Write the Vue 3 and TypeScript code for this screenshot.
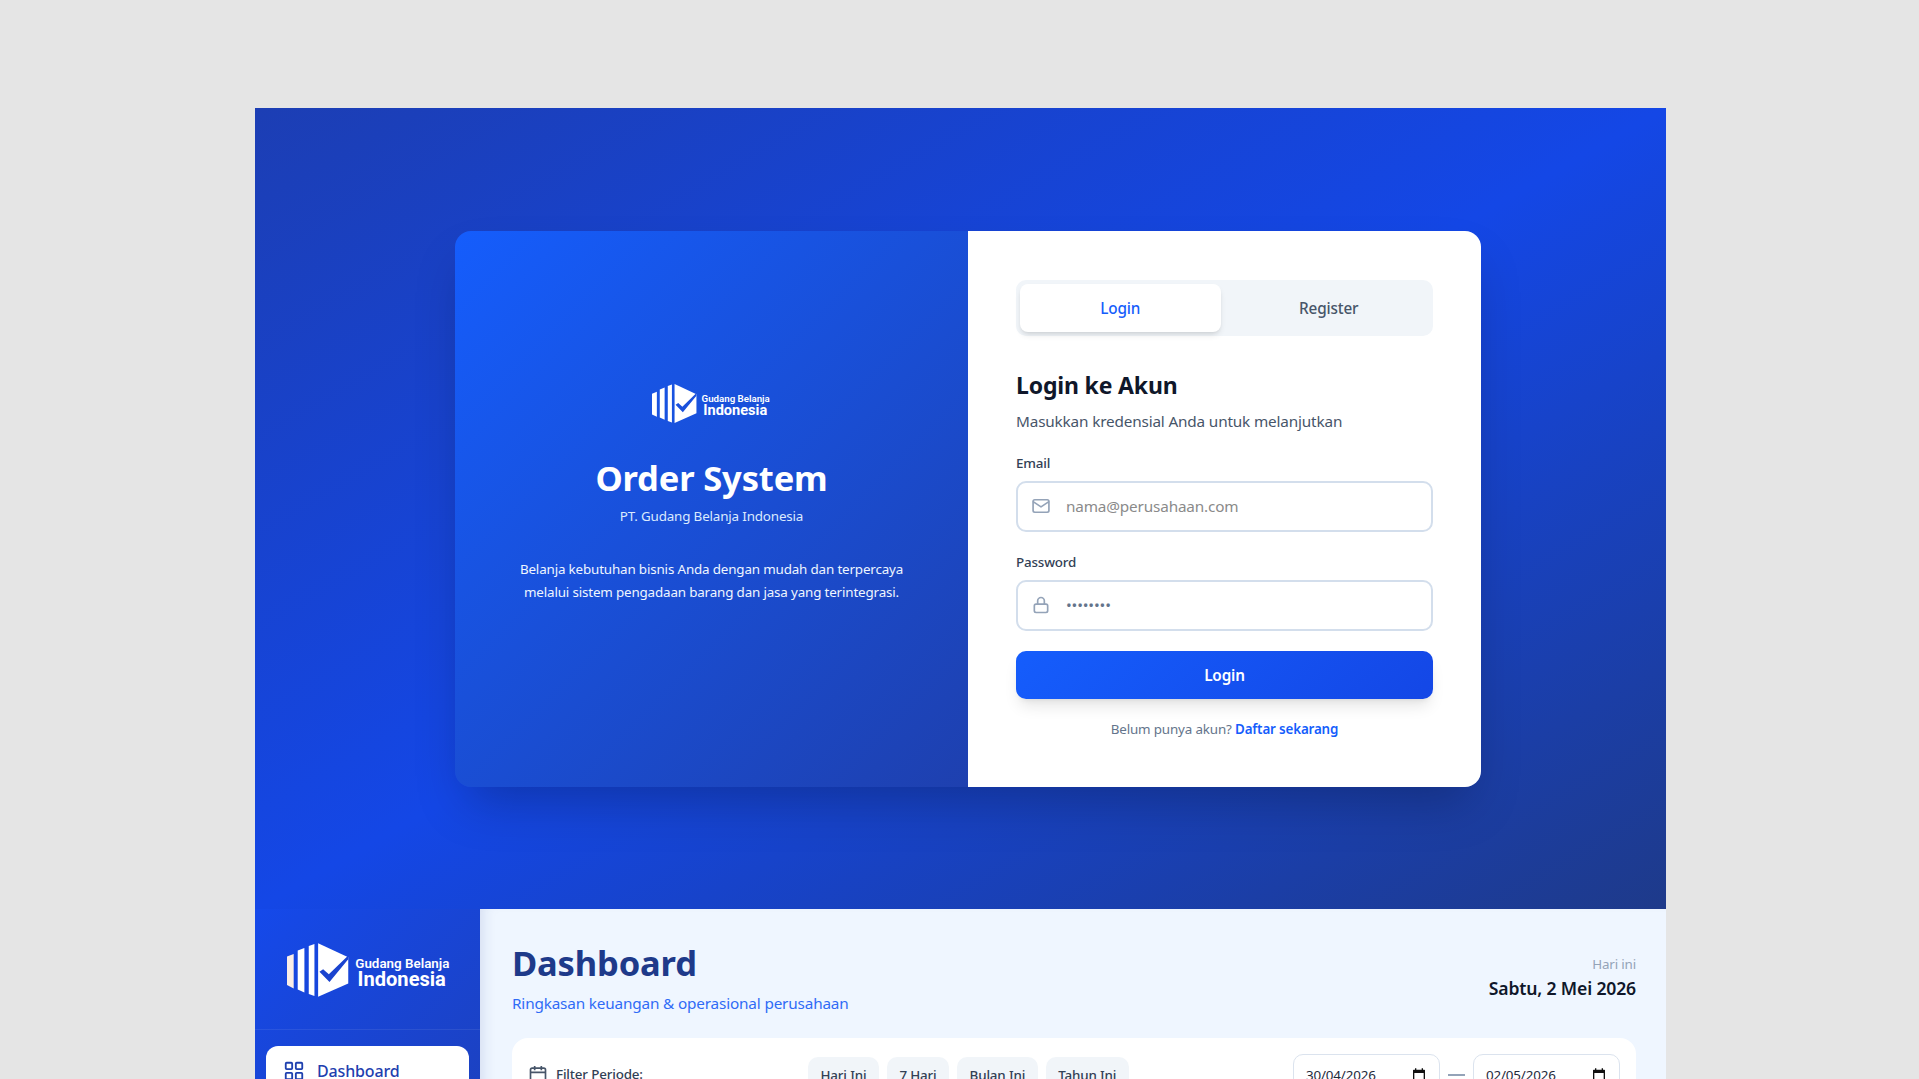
<template>
  <div class="page">
    <div class="frame">
      <section class="hero">
        <div class="auth-card">
          <div class="brand-panel">
            <svg class="logo logo-small" viewBox="0 0 490 160">
              <polygon points="0,40 20,32 20,135 0,125" fill="#fff" />
              <polygon points="32,22 52,14 52,147 32,138" fill="#fff" />
              <polygon points="65,8 82,2 82,158 65,152" fill="#fff" />
              <polygon points="93,0 183,42 183,120 93,160" fill="#fff" />
              <polygon points="97,85 108,78 125,93 183,37 183,48 127,116" fill="#1a50dc" />
              <text x="204" y="73" class="logo-top">Gudang Belanja</text>
              <text x="211" y="128" class="logo-bottom">Indonesia</text>
            </svg>
            <h1>Order System</h1>
            <p class="company">PT. Gudang Belanja Indonesia</p>
            <p class="intro">
              Belanja kebutuhan bisnis Anda dengan mudah dan terpercaya<br />
              melalui sistem pengadaan barang dan jasa yang terintegrasi.
            </p>
          </div>

          <div class="form-panel">
            <div class="tabs">
              <button class="tab active">Login</button>
              <button class="tab">Register</button>
            </div>

            <h2>Login ke Akun</h2>
            <p class="form-sub">Masukkan kredensial Anda untuk melanjutkan</p>

            <label class="field-label">Email</label>
            <div class="field">
              <svg class="field-icon" viewBox="0 0 24 24">
                <rect x="2.5" y="4.5" width="19" height="15" rx="2" />
                <path d="M3 7l9 6 9-6" />
              </svg>
              <input type="text" placeholder="nama@perusahaan.com" />
            </div>

            <label class="field-label second">Password</label>
            <div class="field">
              <svg class="field-icon" viewBox="0 0 24 24">
                <rect x="4" y="11" width="16" height="10" rx="2" />
                <path d="M8 11V7a4 4 0 0 1 8 0v4" />
              </svg>
              <input type="password" value="password" />
            </div>

            <button class="submit">Login</button>
            <p class="switch">Belum punya akun? <a href="#">Daftar sekarang</a></p>
          </div>
        </div>
      </section>

      <section class="dashboard">
        <aside class="sidebar">
          <div class="side-logo">
            <svg class="logo logo-large" viewBox="0 0 490 160">
              <polygon points="0,40 20,32 20,135 0,125" fill="#fbeee6" />
              <polygon points="32,22 52,14 52,147 32,138" fill="#fff" />
              <polygon points="65,8 82,2 82,158 65,152" fill="#fff" />
              <polygon points="93,0 183,42 183,120 93,160" fill="#fff" />
              <polygon points="97,85 108,78 125,93 183,37 183,48 127,116" fill="#1a43cf" />
              <text x="204" y="73" class="logo-top">Gudang Belanja</text>
              <text x="211" y="128" class="logo-bottom">Indonesia</text>
            </svg>
          </div>
          <nav class="side-nav">
            <a class="nav-item" href="#">
              <svg viewBox="0 0 24 24">
                <rect x="3" y="3" width="7" height="7" rx="1" />
                <rect x="14" y="3" width="7" height="7" rx="1" />
                <rect x="14" y="14" width="7" height="7" rx="1" />
                <rect x="3" y="14" width="7" height="7" rx="1" />
              </svg>
              Dashboard
            </a>
          </nav>
        </aside>

        <main class="main">
          <header class="main-head">
            <div>
              <h3>Dashboard</h3>
              <p class="main-sub">Ringkasan keuangan &amp; operasional perusahaan</p>
            </div>
            <div class="today">
              <span>Hari ini</span>
              <strong>Sabtu, 2 Mei 2026</strong>
            </div>
          </header>

          <div class="filter-card">
            <div class="filter-label">
              <svg viewBox="0 0 24 24">
                <rect x="3" y="5" width="18" height="16" rx="2" />
                <path d="M8 2.5v5M16 2.5v5M3 10h18" />
              </svg>
              Filter Periode:
            </div>
            <div class="pills">
              <button v-for="p in periods" :key="p" class="pill">{{ p }}</button>
            </div>
            <div class="dates">
              <div class="date-box">
                30/04/2026
                <svg viewBox="0 0 24 24"><path d="M6 2h2v2h8V2h2v2h2a1 1 0 0 1 1 1v16a1 1 0 0 1-1 1H4a1 1 0 0 1-1-1V5a1 1 0 0 1 1-1h2zM5 9v11h14V9z" /></svg>
              </div>
              <span class="dash"></span>
              <div class="date-box">
                02/05/2026
                <svg viewBox="0 0 24 24"><path d="M6 2h2v2h8V2h2v2h2a1 1 0 0 1 1 1v16a1 1 0 0 1-1 1H4a1 1 0 0 1-1-1V5a1 1 0 0 1 1-1h2zM5 9v11h14V9z" /></svg>
              </div>
            </div>
          </div>
        </main>
      </section>
    </div>
  </div>
</template>

<script setup lang="ts">
const periods: string[] = ['Hari Ini', '7 Hari', 'Bulan Ini', 'Tahun Ini']
</script>

<style>
html,
body {
  margin: 0;
  height: 100%;
  overflow: hidden;
  background: #e5e5e5;
}
</style>

<style scoped>
* {
  box-sizing: border-box;
}
.page {
  height: 1079px;
  padding: 108px 0 0 255px;
  overflow: hidden;
  font-family: "Noto Sans", "Open Sans", sans-serif;
  letter-spacing: -0.01em;
}
button,
input {
  letter-spacing: inherit;
}
.frame {
  width: 1411px;
}
.hero {
  height: 801px;
  padding: 1px 0 0 15px;
  display: flex;
  align-items: center;
  justify-content: center;
  background: linear-gradient(to bottom right, #1c3eb4 0%, #1447e6 50%, #1e3a8a 100%);
}
.auth-card {
  width: 1026px;
  height: 556px;
  display: flex;
  border-radius: 16px;
  overflow: hidden;
  box-shadow: 0 25px 50px -12px rgba(0, 0, 0, 0.25);
}
.brand-panel {
  width: 50%;
  padding-top: 153px;
  display: flex;
  flex-direction: column;
  align-items: center;
  text-align: center;
  color: #fff;
  background: linear-gradient(135deg, #155dfc 0%, #1e40af 100%);
}
.logo {
  display: block;
  overflow: visible;
}
.logo-small {
  width: 119px;
  height: 39px;
}
.logo-large {
  width: 164px;
  height: 54px;
}
.logo-top {
  font-family: Roboto, sans-serif;
  font-size: 40px;
  font-weight: 600;
  fill: #fff;
  letter-spacing: 0;
}
.logo-bottom {
  font-family: Roboto, sans-serif;
  font-size: 60px;
  font-weight: 700;
  fill: #fff;
  letter-spacing: 0;
}
h1 {
  margin: 31px 0 0;
  font-size: 34.5px;
  line-height: 48px;
  font-weight: 700;
}
.company {
  margin: 4px 0 0;
  font-size: 13.4px;
  line-height: 20px;
  color: #dbeafe;
}
.intro {
  margin: 32px 0 0;
  font-size: 13.4px;
  line-height: 23px;
  color: #eff6ff;
}
.form-panel {
  width: 50%;
  padding: 49px 48px 48px;
  background: #fff;
}
.tabs {
  display: flex;
  gap: 8px;
  height: 56px;
  padding: 4px;
  border-radius: 10px;
  background: #f1f5f9;
}
.tab {
  flex: 1;
  border: 0;
  border-radius: 8px;
  background: transparent;
  font: 500 15.3px "Noto Sans", sans-serif;
  color: #475569;
}
.tab.active {
  color: #155dfc;
  background: #fff;
  box-shadow: 0 4px 6px -1px rgba(0, 0, 0, 0.1), 0 2px 4px -2px rgba(0, 0, 0, 0.1);
}
h2 {
  margin: 33px 0 0;
  font-size: 23px;
  line-height: 32px;
  font-weight: 700;
  color: #0f172a;
}
.form-sub {
  margin: 8px 0 0;
  font-size: 15.3px;
  line-height: 24px;
  color: #475569;
}
.field-label {
  display: block;
  margin-top: 20px;
  font-size: 13.4px;
  line-height: 20px;
  font-weight: 500;
  color: #334155;
}
.field-label.second {
  margin-top: 20px;
}
.field {
  position: relative;
  height: 51px;
  margin-top: 8px;
}
.field-icon {
  position: absolute;
  left: 15px;
  top: 15px;
  width: 20px;
  height: 20px;
  fill: none;
  stroke: #94a3b8;
  stroke-width: 2;
  stroke-linecap: round;
  stroke-linejoin: round;
}
.field input {
  width: 100%;
  height: 100%;
  padding: 0 16px 2px 48px;
  border: 2px solid #d3deec;
  border-radius: 10px;
  outline: none;
  background: #fff;
  font: 15.3px "Noto Sans", sans-serif;
  color: #64748b;
}
.field input::placeholder {
  color: #8a8a8a;
}
.submit {
  display: block;
  width: 100%;
  height: 48px;
  margin-top: 20px;
  border: 0;
  border-radius: 10px;
  background: linear-gradient(135deg, #155dfc, #1447e6);
  box-shadow: 0 10px 15px -3px rgba(0, 0, 0, 0.1), 0 4px 6px -4px rgba(0, 0, 0, 0.1);
  font: 600 15.3px "Noto Sans", sans-serif;
  color: #fff;
}
.switch {
  margin: 20px 0 0;
  text-align: center;
  font-size: 13.4px;
  line-height: 20px;
  color: #64748b;
}
.switch a {
  color: #155dfc;
  font-weight: 600;
  text-decoration: none;
}
.dashboard {
  display: flex;
  height: 300px;
}
.sidebar {
  width: 225px;
  flex-shrink: 0;
  background: linear-gradient(135deg, #1549ea, #1e3fb5);
}
.side-logo {
  height: 121px;
  padding: 34px 0 0 32px;
  border-bottom: 1px solid rgba(255, 255, 255, 0.08);
}
.side-nav {
  padding: 16px 11px;
}
.nav-item {
  display: flex;
  align-items: center;
  gap: 12px;
  height: 50px;
  padding: 0 20px 0 17px;
  border-radius: 12px;
  background: #fff;
  font-size: 16px;
  font-weight: 500;
  color: #1e40af;
  text-decoration: none;
}
.nav-item svg {
  width: 22px;
  height: 22px;
  fill: none;
  stroke: #1e40af;
  stroke-width: 2;
}
.main {
  flex: 1;
  padding: 27px 30px 0 32px;
  background: #eff6ff;
  box-shadow: inset 12px 0 16px -12px rgba(30, 58, 138, 0.18);
}
.main-head {
  display: flex;
  justify-content: space-between;
  align-items: center;
  height: 84px;
}
h3 {
  margin: 0;
  font-size: 34.5px;
  line-height: 44px;
  font-weight: 700;
  color: #1e3a8a;
}
.main-sub {
  margin: 6px 0 0;
  font-size: 15.3px;
  line-height: 24px;
  color: #2f6bf6;
}
.today {
  text-align: right;
}
.today span {
  display: block;
  font-size: 13.4px;
  line-height: 20px;
  color: #94a3b8;
}
.today strong {
  display: block;
  font-size: 17.6px;
  line-height: 28px;
  font-weight: 600;
  color: #0f172a;
}
.filter-card {
  display: flex;
  align-items: flex-start;
  height: 100px;
  margin-top: 18px;
  padding: 16px;
  border-radius: 16px;
  background: #fff;
}
.filter-label {
  display: flex;
  align-items: center;
  gap: 8px;
  width: 280px;
  height: 36px;
  margin-top: 2px;
  font-size: 13.4px;
  font-weight: 500;
  color: #334155;
}
.filter-label svg {
  width: 20px;
  height: 20px;
  fill: none;
  stroke: #475569;
  stroke-width: 2;
}
.pills {
  display: flex;
  gap: 8px;
  margin-top: 3px;
}
.pill {
  height: 36px;
  padding: 0 12.5px;
  border: 0;
  border-radius: 10px;
  background: #f1f5f9;
  font: 500 13.4px "Noto Sans", sans-serif;
  color: #334155;
}
.dates {
  display: flex;
  align-items: center;
  gap: 8px;
  margin-left: auto;
}
.date-box {
  display: flex;
  align-items: center;
  justify-content: space-between;
  width: 147px;
  height: 42px;
  padding: 0 12px;
  border: 1px solid #dbe3ee;
  border-radius: 10px;
  background: #fff;
  font-size: 13.4px;
  color: #1e293b;
}
.date-box svg {
  width: 16px;
  height: 16px;
  fill: #111;
}
.dash {
  width: 17px;
  height: 2px;
  background: #94a3b8;
}
</style>
